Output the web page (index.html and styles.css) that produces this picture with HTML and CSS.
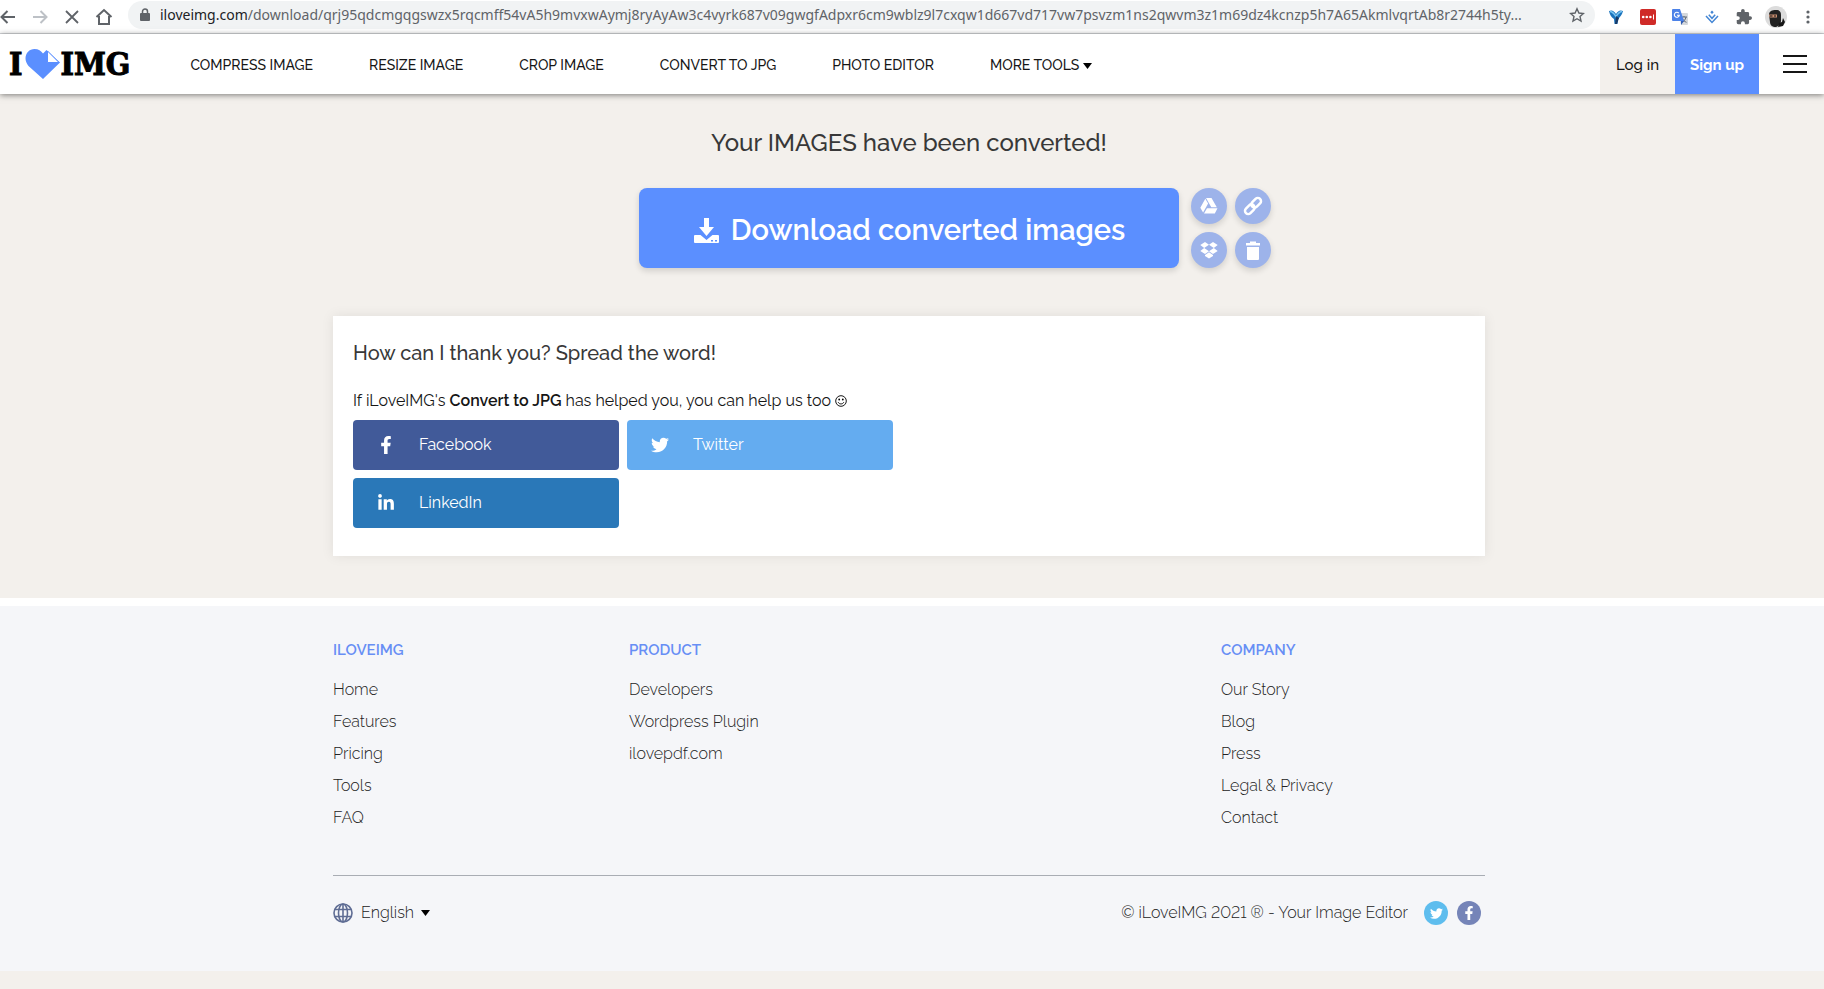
FILE: index.html
```html
<!DOCTYPE html>
<html lang="en">
<head>
<meta charset="utf-8">
<title>iLoveIMG - Convert to JPG</title>
<link rel="stylesheet" href="styles.css">
</head>
<body>
<svg class="sprite" aria-hidden="true">
  <symbol id="twitter" viewBox="0 0 512 512"><path d="M459 152c.3 4.500.3 9 .3 13.600 0 138.700-105.600 298.600-298.600 298.600-59.500 0-114.700-17.200-161.100-47.100 8.400 1 16.600 1.300 25.300 1.300 49 0 94.200-16.600 130.300-44.800-46.100-1-84.800-31.200-98.100-72.800 6.500 1 13 1.600 19.800 1.600 9.400 0 18.800-1.300 27.600-3.600-48-9.700-84.100-52-84.100-103v-1.300c14 7.800 30.200 12.700 47.400 13.300-28.300-18.800-46.800-51-46.800-87.400 0-19.500 5.200-37.400 14.300-53 51.700 63.700 129.300 105.300 216.400 109.800-1.600-7.800-2.600-15.900-2.600-24 0-57.800 46.800-104.900 104.900-104.900 30.200 0 57.500 12.700 76.700 33.100 23.700-4.500 46.500-13.300 66.600-25.300-7.800 24.400-24.400 44.800-46.100 57.800 21.100-2.300 41.600-8.100 60.400-16.200-14.300 20.800-32.200 39.300-52.600 54.300z"/></symbol>
  <symbol id="facebook" viewBox="0 0 320 512"><path d="M279 288l14.200-92.700h-88.900v-60.100c0-25.400 12.400-50.100 52.200-50.100h40.400V6.300S260.400 0 225.400 0C152.200 0 104.400 44.400 104.400 124.700v70.600H23V288h81.400v224h100.200V288z"/></symbol>
  <symbol id="linkedin" viewBox="0 0 448 512"><path d="M100.300 448H7.400V148.900h92.900zM53.800 108.100C24.100 108.100 0 83.500 0 53.800a53.800 53.800 0 0 1 107.600 0c0 29.700-24.100 54.300-53.800 54.300zM447.900 448h-92.700V302.400c0-34.700-.7-79.200-48.300-79.200-48.300 0-55.700 37.700-55.700 76.700V448h-92.800V148.900h89.100v40.800h1.300c12.400-23.500 42.700-48.300 87.900-48.300 94 0 111.300 61.900 111.300 142.300V448z"/></symbol>
</svg>

<div class="browser">
  <button class="tool" aria-label="Back"><svg width="18" height="18" viewBox="0 0 18 18"><path d="M16 9H3M8.500 3L2.500 9l6 6" fill="none" stroke="#5f6368" stroke-width="2"/></svg></button>
  <button class="tool" aria-label="Forward"><svg width="18" height="18" viewBox="0 0 18 18"><path d="M2 9h14M9.500 3l6 6-6 6" fill="none" stroke="#bdc1c6" stroke-width="2"/></svg></button>
  <button class="tool" aria-label="Stop"><svg width="18" height="18" viewBox="0 0 18 18"><path d="M3 3l12 12M15 3L3 15" fill="none" stroke="#5f6368" stroke-width="1.800"/></svg></button>
  <button class="tool" aria-label="Home"><svg width="18" height="18" viewBox="0 0 18 18"><path d="M1.500 9L9 2l7.500 7M4 8v8h10V8" fill="none" stroke="#5f6368" stroke-width="2"/></svg></button>
  <div class="address">
    <svg width="10" height="14" viewBox="0 0 10 14"><path d="M2.500 5V3.500a2.500 2.500 0 0 1 5 0V5" fill="none" stroke="#5f6368" stroke-width="1.500"/><rect y="5" width="10" height="8" rx="1" fill="#5f6368"/></svg>
    <label for="url">iloveimg.com</label>
    <input id="url" type="text" readonly value="/download/qrj95qdcmgqgswzx5rqcmff54vA5h9mvxwAymj8ryAyAw3c4vyrk687v09gwgfAdpxr6cm9wblz9l7cxqw1d667vd717vw7psvzm1ns2qwvm3z1m69dz4kcnzp5h7A65AkmlvqrtAb8r2744h5ty...">
    <button class="tool" aria-label="Bookmark"><svg width="16" height="16" viewBox="0 0 16 16"><path d="M8 1.800l1.900 4.200 4.500.5-3.400 3 1 4.500L8 11.700 4 14l1-4.500-3.400-3 4.500-.5z" fill="none" stroke="#5f6368" stroke-width="1.400"/></svg></button>
  </div>
  <div class="extensions">
    <button class="tool" aria-label="Vector extension"><svg width="16" height="16" viewBox="0 0 16 16"><path d="M1 2c3-1.500 5 0 7 3 2-3 4-4.500 7-3-1 4-3 6-5 8l-.5 5h-3L6 10C3 8 2 6 1 2z" fill="#1b74bd"/><path d="M2 2.500c2 0 4 2 6 5 2-3 4-5 6-5" fill="none" stroke="#7cc6f2" stroke-width="1.500"/><path d="M8 7l3 2-2 6H7z" fill="#173a68"/></svg></button>
    <button class="tool" aria-label="Password manager"><svg width="16" height="16" viewBox="0 0 16 16"><rect width="16" height="16" rx="2" fill="#cf2a27"/><circle cx="3.200" cy="8" r="1.300" fill="#fff"/><circle cx="6.800" cy="8" r="1.300" fill="#fff"/><circle cx="10.400" cy="8" r="1.300" fill="#fff"/><path d="M13.500 5.500v5" stroke="#fff"/></svg></button>
    <button class="tool" aria-label="Translate"><svg width="16" height="16" viewBox="0 0 16 16"><path d="M6 4h9a1 1 0 0 1 1 1v10a1 1 0 0 1-1 1H9z" fill="#d5d8dc"/><path d="M9 8h6M12 7v1M14 8c-.5 3-2.500 4.500-4 5M10.500 9.500c.8 2 2 3 4 3.800" fill="none" stroke="#606a76"/><path d="M1 0h7l4 12H1a1 1 0 0 1-1-1V1a1 1 0 0 1 1-1z" fill="#4c82e8"/><path d="M9 12h3l-3 4z" fill="#2f5db5"/><path d="M6.800 4.200A2.500 2.500 0 1 0 7.300 6.300H5" fill="none" stroke="#fff" stroke-width="1.100"/></svg></button>
    <button class="tool" aria-label="Downloader"><svg width="16" height="16" viewBox="0 0 16 16"><path d="M2 7l6 6.500L14 7M4.800 5.800L8 9.300l3.200-3.500" fill="none" stroke="#4285d4" stroke-width="1.500"/><path d="M8 1.500l1.700 1.700L8 5 6.300 3.200z" fill="#4285d4"/></svg></button>
    <button class="tool" aria-label="Extensions"><svg width="16" height="16" viewBox="1 1 22 22"><path d="M20.500 11H19V7a2 2 0 0 0-2-2h-4V3.500a2.500 2.500 0 0 0-5 0V5H4a2 2 0 0 0-2 2v3.800h1.500a2.700 2.700 0 0 1 0 5.400H2V20a2 2 0 0 0 2 2h3.800v-1.500a2.700 2.700 0 0 1 5.400 0V22H17a2 2 0 0 0 2-2v-4h1.500a2.500 2.500 0 0 0 0-5z" fill="#5f6368"/></svg></button>
    <button class="tool" aria-label="Profile"><svg width="22" height="22" viewBox="0 0 22 22"><circle cx="11" cy="11" r="11" fill="#dcdcdc"/><path d="M4 9c0-4 3-5 7-5s5 2 5 5v6c0 3-2 5-5 6-4 0-6-2-6-5z" fill="#222"/><path d="M4 8.500h8v3H4.500z" fill="#c98f72"/><path d="M5 10h2.500M9 10h2" stroke="#111"/><path d="M14 17l3-1 1-4 2 4-2 4-5 1z" fill="#161616"/></svg></button>
    <button class="tool" aria-label="Menu"><svg width="16" height="16" viewBox="0 0 16 16"><g fill="#5f6368"><circle cx="8" cy="3" r="1.600"/><circle cx="8" cy="8" r="1.600"/><circle cx="8" cy="13" r="1.600"/></g></svg></button>
  </div>
</div>

<header class="header">
  <a class="logo" href="#" aria-label="I love IMG">
    <span>I</span>
    <svg width="35" height="30" viewBox="0 0 35 30"><path d="M18 30L3.500 17C-3 9 2 0 9.500 0c4 0 6.500 1.800 8.500 4.500L21.500 1 35 13.500z" fill="#5b8fff"/><path d="M22.500 2v11.500H34z" fill="#fff" stroke="#5b8fff"/></svg>
    <span>IMG</span>
  </a>
  <nav class="nav">
    <a href="#">COMPRESS IMAGE</a>
    <a href="#">RESIZE IMAGE</a>
    <a href="#">CROP IMAGE</a>
    <a href="#">CONVERT TO JPG</a>
    <a href="#">PHOTO EDITOR</a>
    <a href="#">MORE TOOLS <svg width="9" height="6" viewBox="0 0 9 6"><path d="M0 0h9L4.500 6z"/></svg></a>
  </nav>
  <div class="account">
    <a class="login" href="#">Log in</a>
    <a class="signup" href="#">Sign up</a>
    <button class="burger" aria-label="Open menu"><svg width="24" height="18" viewBox="0 0 24 18"><path d="M0 1h24M0 9h24M0 17h24" stroke="#161616" stroke-width="2"/></svg></button>
  </div>
</header>

<main class="main">
  <h1>Your IMAGES have been converted!</h1>
  <div class="actions">
    <button class="download"><svg width="25" height="25" viewBox="0 0 25 25"><path d="M10 0h5v9h5l-7.500 9L5 9h5z"/><path d="M1 17h5.500l6 5 6-5H24a1 1 0 0 1 1 1v6a1 1 0 0 1-1 1H1a1 1 0 0 1-1-1v-6a1 1 0 0 1 1-1zm16 5v1.500h2V22zm4 0v1.500h2V22z" fill-rule="evenodd"/></svg>Download converted images</button>
    <div class="targets">
      <button aria-label="Save to Google Drive"><svg width="18" height="16" viewBox="0 0 18 16"><path d="M6 0h5.500l5.300 9.200h-5.500zM5.300.8l2.800 4.800-5 9L.3 9.800zM7 10.200h10.500L14.800 15.500H4z"/></svg></button>
      <button aria-label="Copy link"><svg width="20" height="20" viewBox="0 0 20 20"><g fill="none" stroke="#fff" stroke-width="2.500" transform="rotate(-45 10 10)"><rect x="0" y="6.800" width="11" height="6.400" rx="3.200"/><rect x="9" y="6.800" width="11" height="6.400" rx="3.200"/></g></svg></button>
      <button aria-label="Save to Dropbox"><svg width="18" height="17" viewBox="0 0 18 17"><path d="M5 0l4 2.800L4.200 6 .3 3zM13 0L9 2.800 13.800 6l3.900-3zM.3 9l3.900-3L9 9.200 5 12zM17.700 9l-3.900-3L9 9.200l4 2.800zM9 10.200l4 2.800v1l-4 2.600L5 14v-1z"/></svg></button>
      <button aria-label="Delete"><svg width="14" height="19" viewBox="0 0 14 19"><path d="M0 2h4V.5h6V2h4v2.500H0zM1 6h12v12a1 1 0 0 1-1 1H2a1 1 0 0 1-1-1z"/></svg></button>
    </div>
  </div>
  <section class="card">
    <h2>How can I thank you? Spread the word!</h2>
    <p>If iLoveIMG's <strong>Convert to JPG</strong> has helped you, you can help us too <svg width="12" height="12" viewBox="0 0 12 12"><g fill="none" stroke="#161616"><circle cx="6" cy="6" r="5.300"/><path d="M3.200 7.200c1 2.300 4.600 2.300 5.600 0"/></g><circle cx="4.200" cy="4.500" r=".9"/><circle cx="7.800" cy="4.500" r=".9"/></svg></p>
    <div class="share">
      <a class="facebook" href="#"><svg width="18" height="18"><use href="#facebook"/></svg>Facebook</a>
      <a class="twitter" href="#"><svg width="18" height="18"><use href="#twitter"/></svg>Twitter</a>
      <a class="linkedin" href="#"><svg width="18" height="18"><use href="#linkedin"/></svg>LinkedIn</a>
    </div>
  </section>
</main>

<footer class="footer">
  <div class="columns">
    <section>
      <h3>ILOVEIMG</h3>
      <ul><li><a href="#">Home</a></li><li><a href="#">Features</a></li><li><a href="#">Pricing</a></li><li><a href="#">Tools</a></li><li><a href="#">FAQ</a></li></ul>
    </section>
    <section>
      <h3>PRODUCT</h3>
      <ul><li><a href="#">Developers</a></li><li><a href="#">Wordpress Plugin</a></li><li><a href="#">ilovepdf.com</a></li></ul>
    </section>
    <section class="company">
      <h3>COMPANY</h3>
      <ul><li><a href="#">Our Story</a></li><li><a href="#">Blog</a></li><li><a href="#">Press</a></li><li><a href="#">Legal &amp; Privacy</a></li><li><a href="#">Contact</a></li></ul>
    </section>
  </div>
  <div class="bottom">
    <div class="language">
      <svg width="20" height="20" viewBox="0 0 20 20"><g fill="none" stroke="#5f6d94" stroke-width="1.600"><circle cx="10" cy="10" r="9"/><ellipse cx="10" cy="10" rx="4.500" ry="9"/><path d="M2 6.500h16M2 13.500h16M10 1v18"/></g></svg>
      <select aria-label="Language"><option>English</option></select>
      <svg width="9" height="6" viewBox="0 0 9 6"><path d="M0 0h9L4.500 6z"/></svg>
    </div>
    <div class="legal">
      <span>© iLoveIMG 2021 ® - Your Image Editor</span>
      <a class="round sky" href="#" aria-label="Twitter"><svg width="13" height="13"><use href="#twitter"/></svg></a>
      <a class="round indigo" href="#" aria-label="Facebook"><svg width="14" height="14"><use href="#facebook"/></svg></a>
    </div>
  </div>
</footer>
</body>
</html>
```
FILE: styles.css
```css
* { box-sizing: border-box; }
body {
  margin: 0;
  background: #f3f0ec;
  color: #161616;
  font: 16px/24px "Raleway", "Lato", sans-serif;
  font-variant-numeric: lining-nums;
}
a { color: inherit; text-decoration: none; }
button, input, select { font: inherit; font-variant-numeric: inherit; color: inherit; border: 0; padding: 0; background: none; }
svg { flex: none; }
h1, h2, h3, p, ul { margin: 0; padding: 0; }
ul { list-style: none; }
.sprite { display: none; }

.browser {
  display: flex;
  align-items: center;
  height: 34px;
  background: #fff;
  border-bottom: 1px solid #d6d8db;
}
.tool { display: flex; align-items: center; justify-content: center; }
.browser > .tool { width: 32px; padding-right: 16px; flex: none; height: 30px; }
.address {
  display: flex;
  align-items: center;
  flex: 1;
  min-width: 0;
  height: 28px;
  margin: 0 5px 4px 0;
  padding: 0 10px 0 12px;
  border-radius: 14px;
  background: #f1f3f4;
  font: 14px/28px "Noto Sans", sans-serif;
}
.address label { margin-left: 10px; color: #202124; }
.address input { flex: 1; min-width: 0; color: #5f6368; outline: 0; }
.extensions { display: flex; align-items: center; }
.extensions .tool { width: 32px; height: 30px; }

.header {
  position: relative;
  display: flex;
  align-items: center;
  height: 60px;
  padding-left: 9px;
  background: #fff;
  box-shadow: 0 1px 6px rgba(0, 0, 0, .5);
}
.logo {
  display: flex;
  align-items: center;
  color: #000;
  font: bold 32px/40px "DejaVu Serif Condensed", "DejaVu Serif", serif;
  -webkit-text-stroke: 1px #000;
}
.logo svg { margin: 0 0 0 3px; }
.nav { display: flex; gap: 56px; margin-left: 60px; padding-top: 2px; font-size: 14px; font-weight: 500; white-space: nowrap; }
.nav svg { vertical-align: middle; }
.account { display: flex; align-items: stretch; height: 60px; margin-left: auto; font-size: 15px; line-height: 62px; }
.login { padding: 0 16px; background: #f3f0ec; font-weight: 500; }
.signup { padding: 0 15px; background: #5b8fff; color: #fff; font-weight: 700; }
.burger { display: flex; align-items: center; padding: 0 17px 0 24px; }

.main { padding: 33px 6px 42px 0; }
.main h1 { color: #383838; font-size: 24px; line-height: 32px; font-weight: 500; text-align: center; }
.actions { display: grid; grid-template-columns: 1fr auto 1fr; margin-top: 29px; }
.download {
  grid-column: 2;
  display: flex;
  align-items: center;
  gap: 12px;
  height: 80px;
  padding: 4px 54px 0 55px;
  border-radius: 8px;
  background: #5b8fff;
  box-shadow: 0 3px 6px rgba(0, 0, 0, .14);
  color: #fff;
  font-size: 29px;
  font-weight: 600;
}
.download svg, .targets svg, .share svg, .round svg { fill: #fff; }
.targets { display: grid; grid-template-columns: 36px 36px; gap: 8px; margin-left: 12px; }
.targets button {
  display: flex;
  align-items: center;
  justify-content: center;
  height: 36px;
  border-radius: 50%;
  background: #9db3ea;
  box-shadow: 0 3px 6px rgba(0, 0, 0, .14);
}
.card {
  max-width: 1152px;
  margin: 48px auto 0;
  padding: 20px 20px 28px;
  background: #fff;
  box-shadow: 0 0 12px rgba(0, 0, 0, .08);
}
.card h2 { color: #383838; font-size: 20px; line-height: 34px; font-weight: 500; }
.card p { margin-top: 19px; line-height: 24px; }
.card strong { font-weight: 600; }
.card p svg { vertical-align: -1px; }
.share { display: grid; grid-template-columns: repeat(2, 266px); gap: 8px; margin-top: 7px; }
.share a { display: flex; align-items: center; gap: 24px; height: 50px; padding-left: 24px; border-radius: 4px; color: #fff; }
.facebook { background: #415a99; }
.twitter { background: #64acf0; }
.linkedin { background: #2a78b8; }

.footer { padding: 34px 6px 46px 0; border-top: 8px solid #fff; background: #f5f6f9; font-weight: 300; color: #222; }
.columns, .bottom { max-width: 1152px; margin: 0 auto; }
.columns { display: grid; grid-template-columns: repeat(4, 1fr); gap: 32px; padding-bottom: 41px; border-bottom: 1px solid #a9adb4; }
.columns h3 { margin-bottom: 14px; color: #678ef5; font-size: 15px; line-height: 20px; font-weight: 600; }
.columns li { line-height: 32px; }
.company { grid-column: 4; }
.bottom { display: flex; justify-content: space-between; padding-top: 25px; }
.language, .legal { display: flex; align-items: center; height: 24px; }
.language select { margin: 0 6px 0 8px; appearance: none; }
.legal { padding-right: 4px; }
.legal span { margin-right: 7px; }
.round { display: flex; align-items: center; justify-content: center; width: 24px; height: 24px; margin-left: 9px; border-radius: 50%; }
.sky { background: #5ebdee; }
.indigo { background: #7584b8; }
```
